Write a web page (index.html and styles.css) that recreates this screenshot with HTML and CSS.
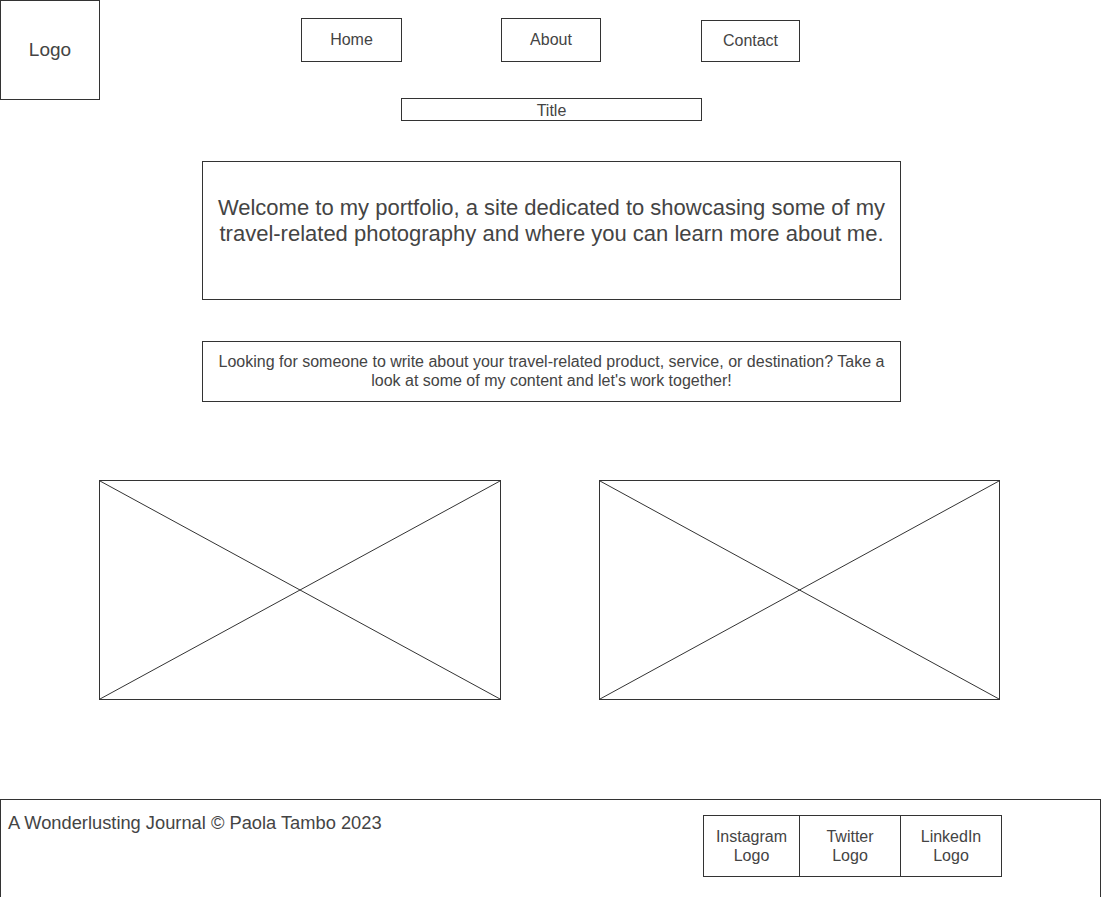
FILE: index.html
```html
<!DOCTYPE html>
<html lang="en">
<head>
<meta charset="UTF-8" />
<meta name="viewport" content="width=device-width, initial-scale=1" />
<title>A Wonderlusting Journal</title>
<link rel="stylesheet" href="styles.css">
</head>
<body>
  <header class="site-header">
    <div class="logo">Logo</div>
    <nav class="main-nav">
      <a class="nav-item nav-home" href="#">Home</a>
      <a class="nav-item nav-about" href="#">About</a>
      <a class="nav-item nav-contact" href="#">Contact</a>
    </nav>
  </header>

  <h1 class="page-title">Title</h1>

  <section class="welcome">
    Welcome to my portfolio, a site dedicated to showcasing some of my travel-related photography and where you can learn more about me.
  </section>

  <section class="pitch">
    Looking for someone to write about your travel-related product, service, or destination? Take a look at some of my content and let's work together!
  </section>

  <section class="gallery">
    <!-- image placeholders -->
    <div class="placeholder placeholder-left">
      <svg viewBox="0 0 100 100" preserveAspectRatio="none" aria-hidden="true">
        <line x1="0" y1="0" x2="100" y2="100" />
        <line x1="100" y1="0" x2="0" y2="100" />
      </svg>
    </div>
    <div class="placeholder placeholder-right">
      <svg viewBox="0 0 100 100" preserveAspectRatio="none" aria-hidden="true">
        <line x1="0" y1="0" x2="100" y2="100" />
        <line x1="100" y1="0" x2="0" y2="100" />
      </svg>
    </div>
  </section>

  <footer class="site-footer">
    <div class="copyright">A Wonderlusting Journal © Paola Tambo 2023</div>
    <div class="socials">
      <div class="social social-ig">Instagram<br>Logo</div>
      <div class="social social-tw">Twitter<br>Logo</div>
      <div class="social social-li">LinkedIn<br>Logo</div>
    </div>
  </footer>
</body>
</html>
```

FILE: styles.css
```css
body {
  margin: 0;
  width: 1101px;
  font-family: 'Liberation Sans', Arial, sans-serif;
  color: #444;
  background: #fff;
  overflow: hidden;
}

.site-header {
  display: flex;
  align-items: flex-start;
}

.logo {
  box-sizing: border-box;
  width: 100px;
  height: 100px;
  border: 1px solid #333;
  display: flex;
  justify-content: center;
  align-items: center;
  font-size: 19px;
}

.main-nav {
  display: flex;
  align-items: flex-start;
  padding-top: 18px;
}

.nav-item {
  box-sizing: border-box;
  border: 1px solid #333;
  display: flex;
  justify-content: center;
  align-items: center;
  font-size: 16px;
  color: #444;
  text-decoration: none;
}

.nav-home {
  margin-left: 201px;
  width: 101px;
  height: 44px;
}

.nav-about {
  margin-left: 99px;
  width: 100px;
  height: 44px;
}

.nav-contact {
  margin-left: 100px;
  margin-top: 2px;
  width: 99px;
  height: 42px;
}

.page-title {
  box-sizing: border-box;
  width: 301px;
  height: 23px;
  margin: -2px auto 0;
  position: relative;
  left: 1px;
  border: 1px solid #333;
  font-size: 16px;
  font-weight: normal;
  line-height: 21px;
  padding-top: 1px;
  text-align: center;
}

.welcome {
  box-sizing: border-box;
  width: 699px;
  height: 139px;
  margin: 40px 0 0 202px;
  border: 1px solid #333;
  padding: 33px 10px 0;
  font-size: 22px;
  line-height: 26px;
  text-align: center;
}

.pitch {
  box-sizing: border-box;
  width: 699px;
  height: 61px;
  margin: 41px 0 0 202px;
  border: 1px solid #333;
  padding: 10px 10px 0;
  font-size: 16px;
  line-height: 19px;
  text-align: center;
}

.gallery {
  display: flex;
  gap: 98px;
  margin: 78px 0 0 99px;
}

.placeholder {
  box-sizing: border-box;
  height: 220px;
  border: 1px solid #333;
}

.placeholder-left {
  width: 402px;
}

.placeholder-right {
  width: 401px;
}

.placeholder svg {
  display: block;
  width: 100%;
  height: 100%;
}

.placeholder line {
  stroke: #333;
  stroke-width: 1;
  vector-effect: non-scaling-stroke;
}

.site-footer {
  box-sizing: border-box;
  display: flex;
  align-items: flex-start;
  width: 1101px;
  height: 120px;
  margin-top: 99px;
  border: 1px solid #333;
  padding: 15px 98px 0 7px;
}

.copyright {
  flex: 1;
  font-size: 18.3px;
  line-height: 20px;
  margin-top: -2px;
  white-space: nowrap;
}

.socials {
  display: flex;
}

.social {
  box-sizing: border-box;
  height: 62px;
  border: 1px solid #333;
  display: flex;
  justify-content: center;
  align-items: center;
  text-align: center;
  font-size: 16px;
  line-height: 19px;
}

.social + .social {
  margin-left: -1px;
}

.social-ig {
  width: 97px;
}

.social-tw {
  width: 102px;
}

.social-li {
  width: 102px;
}
```
